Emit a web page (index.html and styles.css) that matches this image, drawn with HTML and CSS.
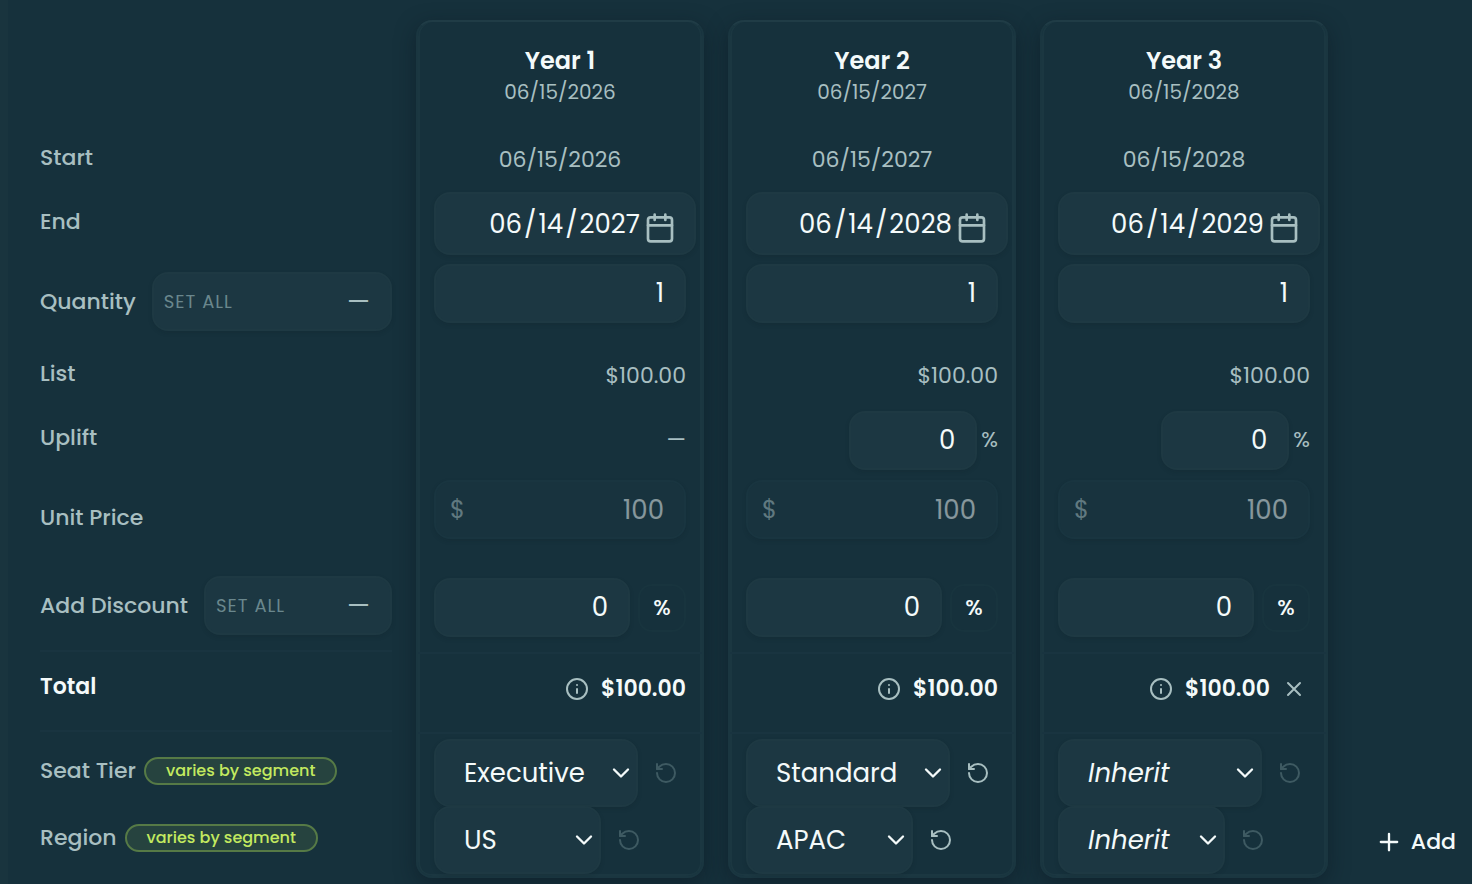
FILE: index.html
```html
<!DOCTYPE html>
<html lang="en-US">
<head>
    <meta charset="UTF-8">
    <meta name="viewport" content="width=device-width, initial-scale=1.0">
    <title>Ramp Schedule</title>
    <link rel="stylesheet" href="styles.css">
</head>
<body>
    <svg class="sprite" aria-hidden="true">
        <symbol id="calendar" viewBox="0 0 24 24"><rect x="3" y="4" width="18" height="18" rx="2"/><path d="M16 2v4M8 2v4M3 10h18"/></symbol>
        <symbol id="chevron" viewBox="0 0 24 24"><path d="m6 9 6 6 6-6"/></symbol>
        <symbol id="reset" viewBox="0 0 24 24"><path d="M3 12a9 9 0 1 0 9-9 9.75 9.75 0 0 0-6.74 2.74L3 8"/><path d="M3 3v5h5"/></symbol>
        <symbol id="info" viewBox="0 0 24 24"><circle cx="12" cy="12" r="10"/><path d="M12 16v-4M12 8h.01"/></symbol>
        <symbol id="close" viewBox="0 0 24 24"><path d="M18 6 6 18M6 6l12 12"/></symbol>
        <symbol id="plus" viewBox="0 0 24 24"><path d="M5 12h14M12 5v14"/></symbol>
    </svg>
    <main class="schedule">
        <section class="labels rows">
            <div class="row"></div>
            <div class="row">Start</div>
            <div class="row">End</div>
            <div class="row row-tall">
                <span>Quantity</span>
                <div class="field set-all">
                    <label for="all-quantity">SET ALL</label>
                    <input id="all-quantity" type="text" placeholder="—">
                </div>
            </div>
            <div class="row">List</div>
            <div class="row">Uplift</div>
            <div class="row row-tall">Unit Price</div>
            <div class="row row-discount">
                <span>Add Discount</span>
                <div class="field set-all">
                    <label for="all-discount">SET ALL</label>
                    <input id="all-discount" type="text" placeholder="—">
                </div>
            </div>
            <div class="row row-total">Total</div>
            <div class="attributes">
                <div class="attribute">Seat Tier <span class="badge">varies by segment</span></div>
                <div class="attribute">Region <span class="badge">varies by segment</span></div>
            </div>
        </section>

        <section class="card rows">
            <header class="row row-header">
                <h2>Year 1</h2>
                <p>06/15/2026</p>
            </header>
            <div class="row row-start">06/15/2026</div>
            <div class="row row-end">
                <div class="field date">
                    <input type="date" value="2027-06-14" aria-label="End date, year 1">
                    <button class="icon-btn" aria-label="Open calendar"><svg class="icon icon-xl"><use href="#calendar"/></svg></button>
                </div>
            </div>
            <div class="row row-input"><input class="field" type="text" value="1" aria-label="Quantity, year 1"></div>
            <div class="row row-value">$100.00</div>
            <div class="row row-value">—</div>
            <div class="row row-input">
                <div class="field price">
                    <span>$</span>
                    <input type="text" value="100" aria-label="Unit price, year 1" disabled>
                </div>
            </div>
            <div class="row row-discount">
                <input class="field" type="text" value="0" aria-label="Add discount, year 1">
                <button class="unit-btn">%</button>
            </div>
            <div class="row row-total">
                <button class="icon-btn" aria-label="Price details"><svg class="icon"><use href="#info"/></svg></button>
                <span class="total">$100.00</span>
            </div>
            <div class="attributes">
                <div class="attribute">
                    <div class="select select-tier">
                        <select class="field" aria-label="Seat tier, year 1"><option>Executive</option><option>Standard</option></select>
                        <svg class="icon icon-lg"><use href="#chevron"/></svg>
                    </div>
                    <button class="icon-btn" aria-label="Reset seat tier" disabled><svg class="icon"><use href="#reset"/></svg></button>
                </div>
                <div class="attribute">
                    <div class="select select-region">
                        <select class="field" aria-label="Region, year 1"><option>US</option><option>APAC</option></select>
                        <svg class="icon icon-lg"><use href="#chevron"/></svg>
                    </div>
                    <button class="icon-btn" aria-label="Reset region" disabled><svg class="icon"><use href="#reset"/></svg></button>
                </div>
            </div>
        </section>

        <section class="card rows">
            <header class="row row-header">
                <h2>Year 2</h2>
                <p>06/15/2027</p>
            </header>
            <div class="row row-start">06/15/2027</div>
            <div class="row row-end">
                <div class="field date">
                    <input type="date" value="2028-06-14" aria-label="End date, year 2">
                    <button class="icon-btn" aria-label="Open calendar"><svg class="icon icon-xl"><use href="#calendar"/></svg></button>
                </div>
            </div>
            <div class="row row-input"><input class="field" type="text" value="1" aria-label="Quantity, year 2"></div>
            <div class="row row-value">$100.00</div>
            <div class="row row-value">
                <input class="field uplift" id="uplift-2" type="text" value="0">
                <label for="uplift-2">%</label>
            </div>
            <div class="row row-input">
                <div class="field price">
                    <span>$</span>
                    <input type="text" value="100" aria-label="Unit price, year 2" disabled>
                </div>
            </div>
            <div class="row row-discount">
                <input class="field" type="text" value="0" aria-label="Add discount, year 2">
                <button class="unit-btn">%</button>
            </div>
            <div class="row row-total">
                <button class="icon-btn" aria-label="Price details"><svg class="icon"><use href="#info"/></svg></button>
                <span class="total">$100.00</span>
            </div>
            <div class="attributes">
                <div class="attribute">
                    <div class="select select-tier">
                        <select class="field" aria-label="Seat tier, year 2"><option>Standard</option><option>Executive</option></select>
                        <svg class="icon icon-lg"><use href="#chevron"/></svg>
                    </div>
                    <button class="icon-btn" aria-label="Reset seat tier"><svg class="icon"><use href="#reset"/></svg></button>
                </div>
                <div class="attribute">
                    <div class="select select-region">
                        <select class="field" aria-label="Region, year 2"><option>APAC</option><option>US</option></select>
                        <svg class="icon icon-lg"><use href="#chevron"/></svg>
                    </div>
                    <button class="icon-btn" aria-label="Reset region"><svg class="icon"><use href="#reset"/></svg></button>
                </div>
            </div>
        </section>

        <section class="card rows">
            <header class="row row-header">
                <h2>Year 3</h2>
                <p>06/15/2028</p>
            </header>
            <div class="row row-start">06/15/2028</div>
            <div class="row row-end">
                <div class="field date">
                    <input type="date" value="2029-06-14" aria-label="End date, year 3">
                    <button class="icon-btn" aria-label="Open calendar"><svg class="icon icon-xl"><use href="#calendar"/></svg></button>
                </div>
            </div>
            <div class="row row-input"><input class="field" type="text" value="1" aria-label="Quantity, year 3"></div>
            <div class="row row-value">$100.00</div>
            <div class="row row-value">
                <input class="field uplift" id="uplift-3" type="text" value="0">
                <label for="uplift-3">%</label>
            </div>
            <div class="row row-input">
                <div class="field price">
                    <span>$</span>
                    <input type="text" value="100" aria-label="Unit price, year 3" disabled>
                </div>
            </div>
            <div class="row row-discount">
                <input class="field" type="text" value="0" aria-label="Add discount, year 3">
                <button class="unit-btn">%</button>
            </div>
            <div class="row row-total">
                <button class="icon-btn" aria-label="Price details"><svg class="icon"><use href="#info"/></svg></button>
                <span class="total">$100.00</span>
                <button class="icon-btn remove-btn" aria-label="Remove year 3"><svg class="icon"><use href="#close"/></svg></button>
            </div>
            <div class="attributes">
                <div class="attribute">
                    <div class="select select-tier">
                        <select class="field inherit" aria-label="Seat tier, year 3"><option>Inherit</option><option>Executive</option><option>Standard</option></select>
                        <svg class="icon icon-lg"><use href="#chevron"/></svg>
                    </div>
                    <button class="icon-btn" aria-label="Reset seat tier" disabled><svg class="icon"><use href="#reset"/></svg></button>
                </div>
                <div class="attribute">
                    <div class="select select-region">
                        <select class="field inherit" aria-label="Region, year 3"><option>Inherit</option><option>US</option><option>APAC</option></select>
                        <svg class="icon icon-lg"><use href="#chevron"/></svg>
                    </div>
                    <button class="icon-btn" aria-label="Reset region" disabled><svg class="icon"><use href="#reset"/></svg></button>
                </div>
            </div>
        </section>

        <button class="add-btn"><svg class="icon icon-lg"><use href="#plus"/></svg>Add</button>
    </main>
</body>
</html>
```

FILE: styles.css
```css
:root {
    --background-color: #16313c;
    --edge-color: #19343e;
    --line-color: #193440;
    --field-color: #1c3742;
    --field-border: #1e3943;
    --muted-color: #a8bfc1;
    --dim-color: #6a878d;
    --text-color: #f4fafa;
    --accent-color: #c3ea5f;
}
* {
    box-sizing: border-box;
}
body {
    margin: 0;
    min-height: 100vh;
    background-color: var(--background-color);
    border-left: 8px solid var(--edge-color);
    color: var(--muted-color);
    font-family: Poppins, Inter, "Open Sans", sans-serif;
    font-size: 22px;
    line-height: 32px;
}
h2, p {
    margin: 0;
}
input, button, select {
    margin: 0;
    padding: 0;
    border: none;
    background: none;
    color: inherit;
    font: inherit;
}
button {
    cursor: pointer;
}
.sprite {
    position: absolute;
    width: 0;
    height: 0;
}
.icon {
    display: block;
    flex: none;
    width: 24px;
    height: 24px;
    fill: none;
    stroke: currentColor;
    stroke-width: 2;
    stroke-linecap: round;
    stroke-linejoin: round;
}
.icon-lg {
    width: 28px;
    height: 28px;
}
.icon-xl {
    width: 32px;
    height: 32px;
}
.schedule {
    display: grid;
    grid-template-columns: minmax(0, 352fr) repeat(3, minmax(0, 288fr)) minmax(0, 120fr);
    column-gap: 24px;
    align-items: start;
    padding: 20px 0 0 32px;
}

/* every column shares the same row heights */
.rows {
    display: grid;
    grid-template-columns: 100%;
    grid-template-rows: 105px 64px 64px 88px 64px 64px 88px 93px 82px auto;
}
.row {
    display: flex;
    align-items: center;
    padding-top: 2px;
}
.labels {
    font-weight: 500;
}
.labels .row-tall, .labels .row-discount {
    gap: 16px;
}
.labels .row-tall {
    padding-top: 9px;
}
.labels .row-discount {
    padding-top: 4px;
}
.row-total {
    border-top: 2px solid var(--line-color);
    border-bottom: 2px solid var(--line-color);
    padding-bottom: 10px;
}
.labels .row-total {
    color: var(--text-color);
    font-weight: 600;
}
.attributes {
    padding-top: 5px;
}
.attribute {
    display: flex;
    align-items: center;
    height: 67px;
}
.labels .attribute {
    gap: 8px;
}
.badge {
    border: 2px solid #567a46;
    border-radius: 14px;
    background-color: #26433f;
    color: var(--accent-color);
    padding: 0 20px;
    font-size: 16px;
    line-height: 24px;
    white-space: nowrap;
}

.card {
    border: 2px solid #1a3640;
    border-top-color: #203c46;
    border-radius: 16px;
    box-shadow: inset 2px 0 #1b3741, inset -2px 0 #1b3741, inset 0 -2px #1b3741, 0 6px 20px rgba(12, 24, 34, 0.5);
    padding-bottom: 3px;
}
.card .row, .card .attributes {
    padding-left: 16px;
    padding-right: 16px;
}
.card .row-header {
    flex-direction: column;
    padding-top: 23px;
    font-size: 20px;
    line-height: 30px;
}
.row-header h2 {
    color: var(--text-color);
    font-size: 24px;
    font-weight: 600;
    line-height: 32px;
}
.row-start {
    justify-content: center;
}
.row-value {
    justify-content: flex-end;
    gap: 4px;
}
.card .row-end {
    padding-top: 1px;
}
.card .row-input {
    align-items: flex-start;
    padding-top: 9px;
}
.card .row-discount {
    gap: 8px;
    padding-top: 4px;
}
.card .row-total {
    justify-content: flex-end;
    gap: 12px;
}

.field {
    width: 100%;
    min-width: 0;
    height: 59px;
    border: 2px solid var(--field-border);
    border-radius: 16px;
    background-color: var(--field-color);
    box-shadow: 0 2px 4px rgba(12, 24, 34, 0.15);
    padding: 0 20px;
    color: var(--text-color);
    font-size: 26px;
    text-align: right;
}
.field input {
    flex: 1;
    min-width: 0;
    text-align: right;
}
.set-all {
    display: flex;
    flex: 1;
    align-items: center;
    padding-left: 10px;
    font-weight: 400;
}
.set-all label {
    color: var(--dim-color);
    font-size: 18px;
    letter-spacing: 1px;
}
.set-all input::placeholder {
    color: var(--muted-color);
}
.date {
    display: flex;
    flex: none;
    align-items: center;
    justify-content: flex-end;
    width: calc(100% + 10px);
    height: 63px;
    gap: 3px;
    padding-right: 18px;
}
.date input {
    flex: none;
}
.date input::-webkit-datetime-edit-text {
    padding: 0 1px;
}
.date input::-webkit-calendar-picker-indicator {
    display: none;
}
.date .icon-btn {
    align-self: flex-end;
    padding-bottom: 9px;
}
.price {
    display: flex;
    align-items: center;
    border-color: #193540;
    padding-left: 14px;
    background-color: #18333e;
}
.price span, .price input {
    opacity: 0.5;
}
.price span {
    color: var(--muted-color);
    font-size: 24px;
}
.uplift {
    width: 128px;
}
.unit-btn {
    flex: none;
    width: 48px;
    height: 48px;
    border: 2px solid #18343e;
    border-radius: 14px;
    color: var(--text-color);
    font-size: 22px;
    font-weight: 500;
}
.icon-btn {
    flex: none;
    color: var(--muted-color);
}
.icon-btn:disabled {
    color: #3e5a62;
    cursor: default;
}
.total {
    color: var(--text-color);
    font-weight: 600;
}
.remove-btn {
    padding: 4px;
    margin-left: -4px;
}
.card .attribute {
    gap: 16px;
}
.select {
    display: grid;
    align-items: center;
    color: var(--text-color);
}
.select-tier {
    width: 204px;
}
.select-region {
    width: 167px;
}
.select .field {
    grid-area: 1 / 1;
    height: 68px;
    appearance: none;
    padding: 0 28px;
    text-align: left;
}
.select .icon {
    grid-area: 1 / 1;
    justify-self: end;
    margin-right: 3px;
    pointer-events: none;
}
.inherit {
    font-style: italic;
}
.add-btn {
    display: flex;
    align-items: center;
    justify-content: flex-end;
    align-self: end;
    gap: 8px;
    margin-bottom: 16px;
    padding: 4px 16px;
    color: var(--text-color);
    font-weight: 500;
}
```
